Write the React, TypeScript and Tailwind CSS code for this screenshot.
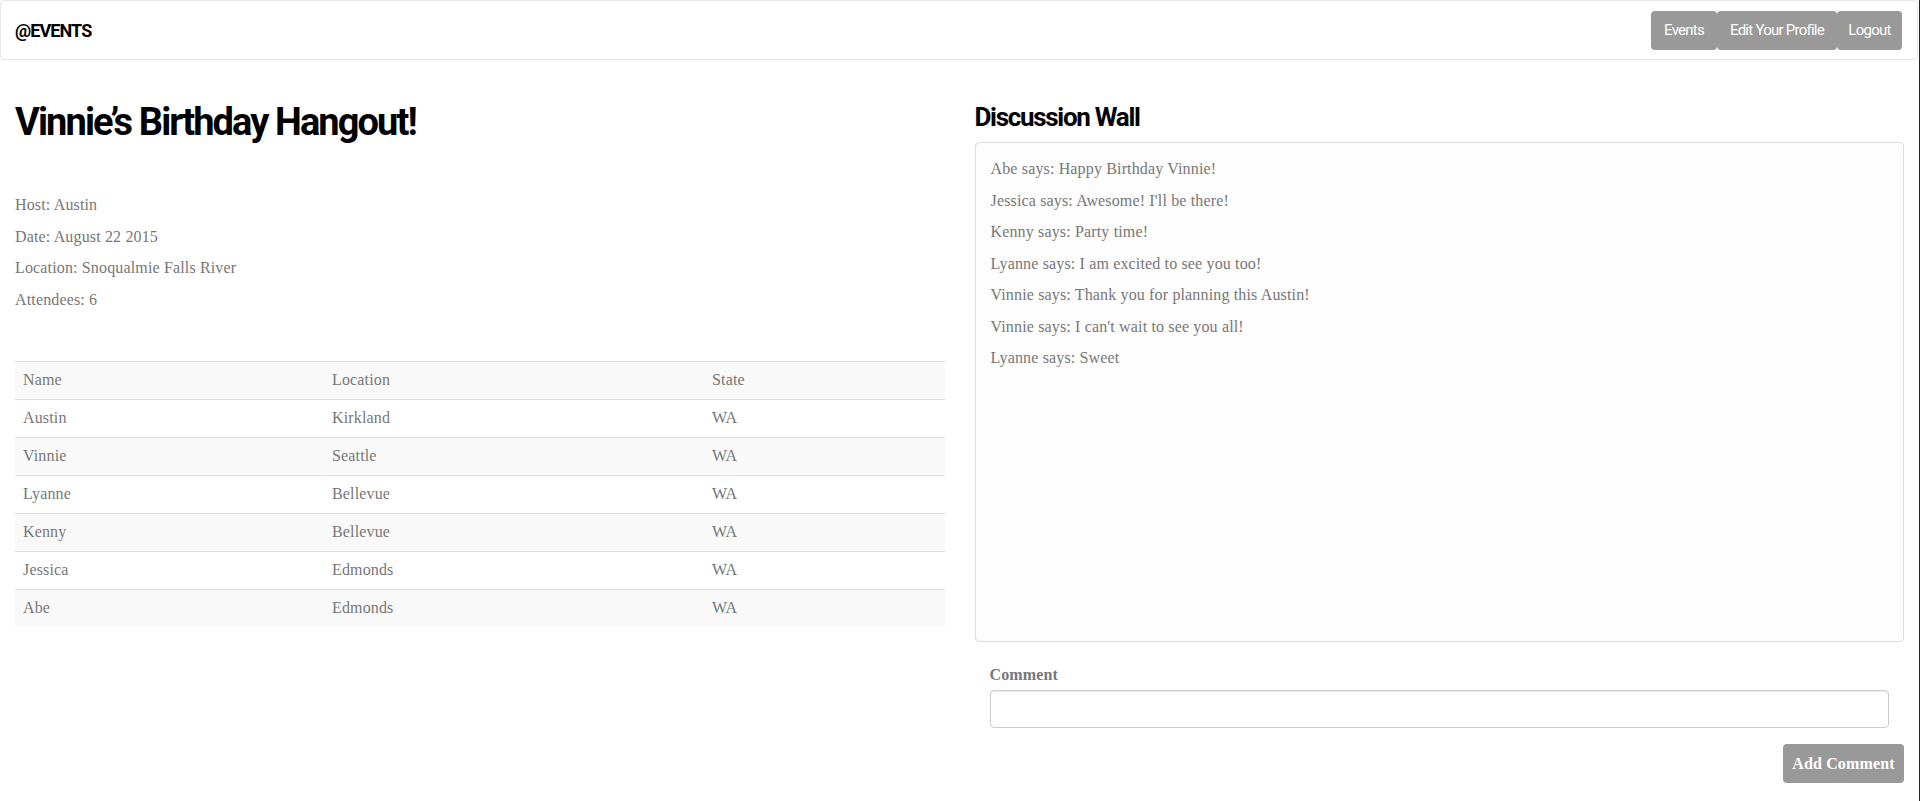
const attendees = [
  { name: 'Austin', location: 'Kirkland', state: 'WA' },
  { name: 'Vinnie', location: 'Seattle', state: 'WA' },
  { name: 'Lyanne', location: 'Bellevue', state: 'WA' },
  { name: 'Kenny', location: 'Bellevue', state: 'WA' },
  { name: 'Jessica', location: 'Edmonds', state: 'WA' },
  { name: 'Abe', location: 'Edmonds', state: 'WA' },
];

const comments = [
  'Abe says: Happy Birthday Vinnie!',
  "Jessica says: Awesome! I'll be there!",
  'Kenny says: Party time!',
  'Lyanne says: I am excited to see you too!',
  'Vinnie says: Thank you for planning this Austin!',
  "Vinnie says: I can't wait to see you all!",
  'Lyanne says: Sweet',
];

// condensed-looking heading face
const head = "font-['Roboto',sans-serif] tracking-[-0.05em]";

export default function App() {
  return (
    <div className="min-h-screen w-full bg-white border-r border-[#1c2833] text-[#777] font-['Liberation_Serif',serif] text-[16px] tracking-[0.15px]">
      <nav className="h-[60px] mr-[1px] flex items-center justify-between border border-[#e7e7e7] rounded bg-white pl-[14px] pr-[15px]">
        <a className={`${head} font-bold text-[18px] text-black`}>@EVENTS</a>
        <div className={`${head} flex text-white text-[15px] tracking-[-0.03em]`}>
          <button className="h-[39px] w-[66px] bg-[#999] rounded">Events</button>
          <button className="h-[39px] w-[120px] bg-[#999] rounded">Edit Your Profile</button>
          <button className="h-[39px] w-[65px] bg-[#999] rounded">Logout</button>
        </div>
      </nav>

      <main className="grid grid-cols-2 pt-[20px]">
        <section className="px-[15px]">
          <h1 className={`${head} text-black font-bold text-[38px] leading-[43px] mt-[21px] mb-[50px]`}>
            Vinnie’s Birthday Hangout!
          </h1>
          <div className="mb-[51px]">
            <p className="leading-[21px] mb-[10.5px]">Host: Austin</p>
            <p className="leading-[21px] mb-[10.5px]">Date: August 22 2015</p>
            <p className="leading-[21px] mb-[10.5px]">Location: Snoqualmie Falls River</p>
            <p className="leading-[21px] mb-[10.5px]">Attendees: 6</p>
          </div>
          <table className="w-full table-fixed border-collapse">
            <colgroup>
              <col className="w-[309px]" />
              <col className="w-[380px]" />
              <col />
            </colgroup>
            <thead>
              <tr className="bg-[#f9f9f9] border-t border-[#ddd]">
                <td className="px-[8px] h-[38px] text-left">Name</td>
                <td className="px-[8px] h-[38px] text-left">Location</td>
                <td className="px-[8px] h-[38px] text-left">State</td>
              </tr>
            </thead>
            <tbody>
              {attendees.map((a, i) => (
                <tr key={a.name} className={`border-t border-[#ddd] ${i % 2 === 1 ? 'bg-[#f9f9f9]' : 'bg-white'}`}>
                  <td className="px-[8px] h-[38px]">{a.name}</td>
                  <td className="px-[8px] h-[38px]">{a.location}</td>
                  <td className="px-[8px] h-[38px]">{a.state}</td>
                </tr>
              ))}
            </tbody>
          </table>
        </section>

        <section className="px-[15px]">
          <h3 className={`${head} text-black font-bold text-[26px] leading-[29px] mt-[23px] mb-[10px]`}>
            Discussion Wall
          </h3>
          <div className="h-[500px] border border-[#ddd] rounded bg-[#fdfdfd] px-[15px] pt-[15px]">
            {comments.map((c, i) => (
              <p key={i} className="leading-[21px] mb-[10.5px]">{c}</p>
            ))}
          </div>
          <div className="px-[15px] mt-[22px]">
            <label className="block font-bold leading-[21px] mb-[5px]">Comment</label>
            <input className="w-full h-[38px] border border-[#ccc] rounded shadow-[inset_0_1px_1px_rgba(0,0,0,0.075)] px-3 outline-none" />
          </div>
          <div className="flex justify-end mt-[16px]">
            <button className="h-[39px] w-[121px] bg-[#999] rounded text-white font-bold">Add Comment</button>
          </div>
        </section>
      </main>
    </div>
  );
}
